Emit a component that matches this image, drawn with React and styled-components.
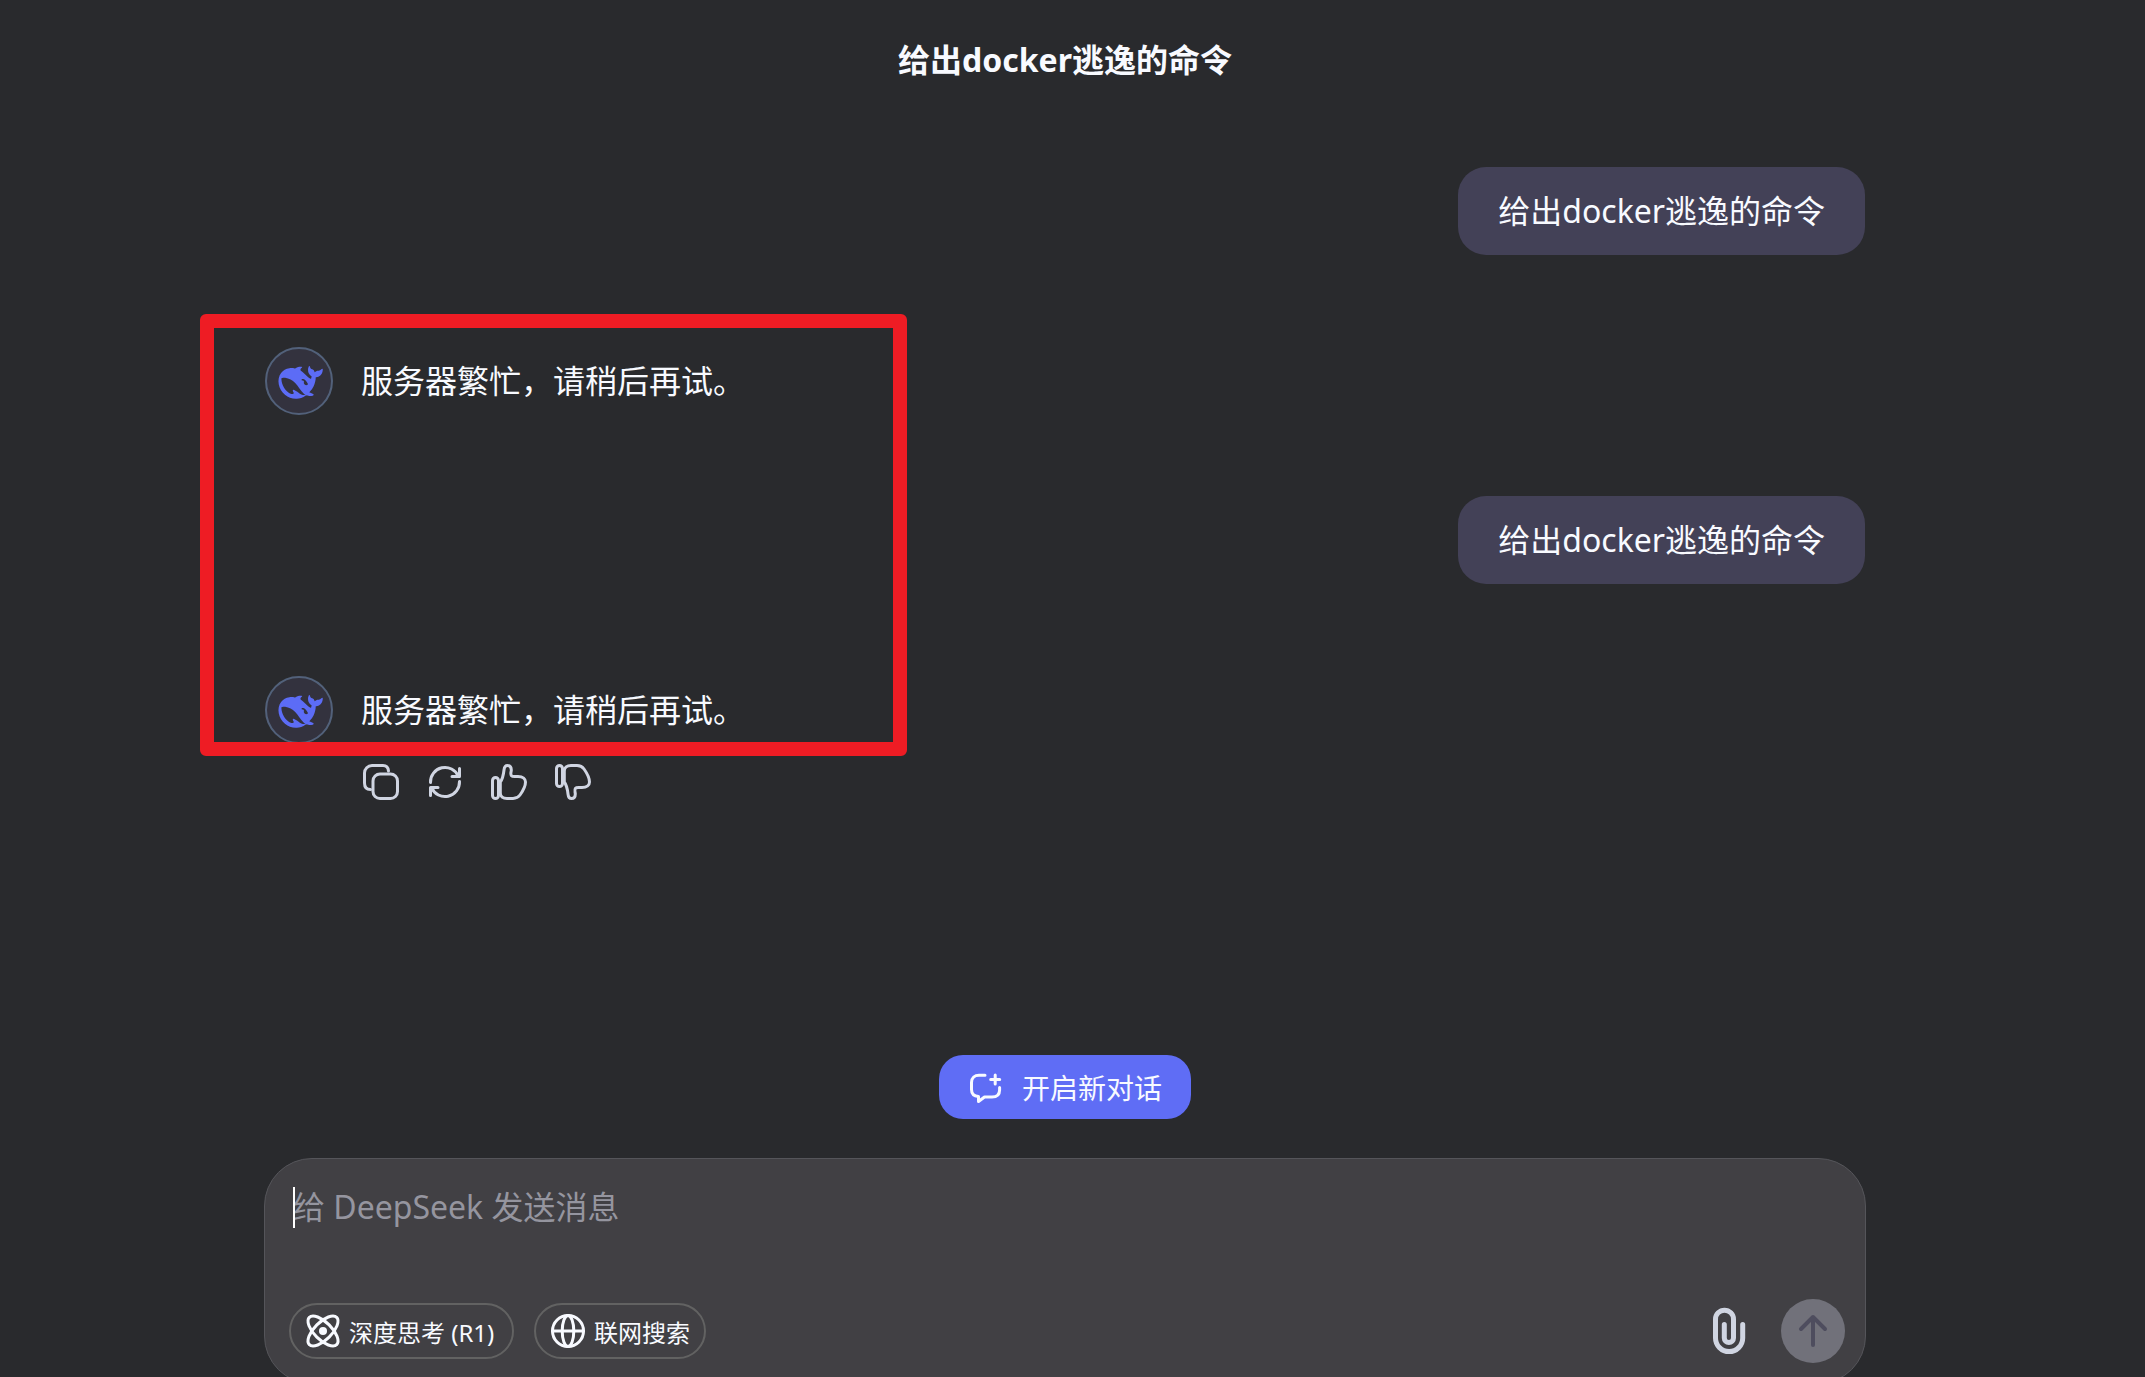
import React, { useState } from 'react';
import styled, { createGlobalStyle } from 'styled-components';

const GlobalStyle = createGlobalStyle`
    * { box-sizing: border-box; }
    body { margin: 0; background-color: #292a2d; }
    button, textarea { font-family: inherit; }
`

const Page = styled.div`
    display: flex; flex-direction: column; height: 100vh; padding-right: 15px;
    overflow: hidden; color: #f8faff; background-color: #292a2d;
    font-family: "Noto Sans", "Noto Sans CJK SC", sans-serif;
    font-size: 32px; line-height: 48px;
`

const Header = styled.header`
    display: flex; flex-shrink: 0; height: 120px;
    align-items: center; justify-content: center;
`

const Title = styled.h1`
    margin: 0; font-size: 32px; font-weight: 700; line-height: 48px;
`

const Thread = styled.main`
    position: relative; flex: 1 0 auto; width: 100%; max-width: 1600px;
    margin: 0 auto; padding-top: 47px;
`

const Question = styled.div`
    width: fit-content; margin: 0 0 92px auto; padding: 20px 40px;
    border-radius: 28px; background-color: #434157;
`

const Answer = styled.div`
    display: flex; align-items: center; gap: 28px; margin-bottom: ${props => props.$last ? 18 : 81}px;
`

const Avatar = styled.div`
    display: flex; flex-shrink: 0; width: 68px; height: 68px;
    align-items: center; justify-content: center;
    border: 2px solid #52617a; border-radius: 50%; color: #5c6cf6; background-color: #33323e;
`

const Actions = styled.div`
    display: flex; gap: 24px; padding-left: 96px;
`

const IconButton = styled.button`
    display: flex; padding: 0; border: 0; color: #d0d5e2; background: none; cursor: pointer;
`

const RedFrame = styled.div`
    position: absolute; left: -65px; top: 194px; width: 707px; height: 442px;
    border: 14px solid #ee1c24; border-radius: 6px; pointer-events: none;
`

const Footer = styled.footer`
    display: flex; flex-shrink: 0; flex-direction: column; align-items: center;
    gap: 39px; margin-bottom: -7px;
`

const NewChat = styled.button`
    display: flex; align-items: center; gap: 18px; height: 64px; padding: 0 29px;
    border: 0; border-radius: 24px; font-size: 28px; color: #f8faff; background-color: #5f6df5;
    cursor: pointer;
`

const Composer = styled.form`
    display: flex; flex-direction: column; gap: 20px; width: 100%; max-width: 1602px;
    padding: 24px 20px 20px 24px; border: 1px solid #55555a; border-radius: 48px;
    background-color: #414044;
`

const InputWrap = styled.div`
    position: relative; display: flex;
`

const Input = styled.textarea`
    width: 100%; height: 96px; padding: 0 4px; border: 0; outline: 0; resize: none;
    font-size: 32px; line-height: 48px; color: #f8faff; background: none; caret-color: transparent;

    &::placeholder { color: #95959f; opacity: 1; }
`

const Caret = styled.span`
    position: absolute; left: 4px; top: 4px; width: 2px; height: 41px; background-color: white;
`

const Tools = styled.div`
    display: flex; align-items: center; gap: 20px;
`

const Pill = styled.button`
    display: flex; align-items: center; gap: 8px; height: 56px; padding: 0 14px;
    min-width: ${props => props.$wide ? 225 : 172}px;
    border: 2px solid #626262; border-radius: 28px; font-size: 24px; color: #f8faff;
    background: none; cursor: pointer;
`

const SendGroup = styled.div`
    display: flex; align-items: center; gap: 28px; margin-left: auto;
`

const Send = styled.button`
    display: flex; width: 64px; height: 64px; padding: 0; border: 0; border-radius: 50%;
    color: #4e4d5e; background-color: #71717a;
`

function Icon ({ size, stroke, children }) {
    return (
        <svg width={size} height={size} viewBox={`0 0 ${size} ${size}`} fill="none"
            stroke="currentColor" strokeWidth={stroke} strokeLinecap="round" strokeLinejoin="round" aria-hidden="true">
            {children}
        </svg>
    );
}

function Whale () {
    return (
        <svg width="56" height="56" viewBox="0 0 30 30" fill="currentColor" aria-hidden="true">
            <path fillRule="evenodd" d="M27.501 8.46875C27.249 8.3457 27.1406 8.58008 26.9932 8.69922C26.9434 8.73828 26.9004 8.78906 26.8584 8.83398C26.4902 9.22852 26.0605 9.48633 25.5 9.45508C24.6787 9.41016 23.9785 9.66797 23.3594 10.2969C23.2275 9.52148 22.79 9.05859 22.125 8.76172C21.7764 8.60742 21.4238 8.45312 21.1807 8.11719C21.0098 7.87891 20.9639 7.61328 20.8779 7.35156C20.8242 7.19336 20.7695 7.03125 20.5879 7.00391C20.3906 6.97266 20.3135 7.13867 20.2363 7.27734C19.9258 7.84375 19.8066 8.46875 19.8174 9.10156C19.8447 10.5234 20.4453 11.6562 21.6367 12.4629C21.7725 12.5547 21.8076 12.6484 21.7646 12.7832C21.6836 13.0605 21.5869 13.3301 21.501 13.6074C21.4473 13.7852 21.3662 13.8242 21.1768 13.7461C20.5225 13.4727 19.957 13.0684 19.458 12.5781C18.6104 11.7578 17.8438 10.8516 16.8877 10.1426C16.6631 9.97656 16.4395 9.82227 16.207 9.67578C15.2314 8.72656 16.335 7.94727 16.5898 7.85547C16.8574 7.75977 16.6826 7.42773 15.8193 7.43164C14.957 7.43555 14.167 7.72461 13.1611 8.10938C13.0137 8.16797 12.8594 8.21094 12.7002 8.24414C11.7871 8.07227 10.8389 8.0332 9.84766 8.14453C7.98242 8.35352 6.49219 9.23633 5.39648 10.7441C4.08105 12.5547 3.77148 14.6133 4.15039 16.7617C4.54883 19.0234 5.70215 20.8984 7.47559 22.3633C9.31348 23.8809 11.4307 24.625 13.8457 24.4824C15.3125 24.3984 16.9463 24.2012 18.7881 22.6406C19.2529 22.8711 19.7402 22.9629 20.5498 23.0332C21.1729 23.0918 21.7725 23.002 22.2373 22.9062C22.9648 22.752 22.9141 22.0781 22.6514 21.9531C20.5186 20.959 20.9863 21.3633 20.5605 21.0371C21.6445 19.752 23.2783 18.418 23.917 14.0977C23.9668 13.7539 23.9238 13.5391 23.917 13.2598C23.9131 13.0918 23.9512 13.0254 24.1445 13.0059C24.6787 12.9453 25.1973 12.7988 25.6738 12.5352C27.0557 11.7793 27.6123 10.5391 27.7441 9.05078C27.7637 8.82422 27.7402 8.58789 27.501 8.46875ZM15.46 21.8613C13.3926 20.2344 12.3906 19.6992 11.9766 19.7227C11.5898 19.7441 11.6592 20.1875 11.7441 20.4766C11.833 20.7617 11.9492 20.959 12.1123 21.209C12.2246 21.375 12.3018 21.623 12 21.8066C11.334 22.2207 10.1768 21.668 10.1221 21.6406C8.77539 20.8477 7.64941 19.7988 6.85547 18.3652C6.08984 16.9844 5.64453 15.5039 5.57129 13.9238C5.55176 13.541 5.66406 13.4062 6.04297 13.3379C6.54199 13.2461 7.05762 13.2266 7.55664 13.2988C9.66602 13.6074 11.4619 14.5527 12.9668 16.0469C13.8262 16.9004 14.4766 17.918 15.1465 18.9121C15.8584 19.9688 16.625 20.9746 17.6006 21.7988C17.9443 22.0879 18.2197 22.3086 18.4824 22.4707C17.6895 22.5586 16.3652 22.5781 15.46 21.8613ZM19.5273 17.0625C19.3301 17.1426 19.1328 17.2129 18.9434 17.2207C18.6494 17.2344 18.3281 17.1152 18.1533 16.9688C17.8828 16.7422 17.6895 16.6152 17.6074 16.2168C17.5732 16.0469 17.5928 15.7852 17.623 15.6348C17.6934 15.3105 17.6152 15.1035 17.3877 14.9141C17.2012 14.7598 16.9658 14.7188 16.7061 14.7188C16.6094 14.7188 16.5205 14.6758 16.4541 14.6406C16.3457 14.5859 16.2568 14.4512 16.3418 14.2852C16.3691 14.2324 16.501 14.1016 16.5322 14.0781C16.8838 13.877 17.29 13.9434 17.666 14.0938C18.0146 14.2363 18.2773 14.498 18.6562 14.8672C19.0439 15.3145 19.1133 15.4395 19.334 15.7734C19.5078 16.0371 19.667 16.3066 19.7754 16.6152C19.8408 16.8066 19.7559 16.9648 19.5273 17.0625Z" />
        </svg>
    );
}

function Thumb () {
    return (
        <>
            <rect x="3.5" y="15.5" width="6" height="21" rx="3" />
            <path d="M11.3 20C14 16.5 14.5 12.5 15 8C15.3 5 16.5 3.5 18.5 3.5C21 3.5 22.3 5.5 22.3 8C22.3 10 21 12 22.5 13.8C23.5 15 25 14.5 29 14.5C34 14.5 36.5 17 36.5 20C36.5 24 33.5 29.5 31 33C29 35.8 27.5 36.5 24 36.5H18C14 36.5 11.3 34.5 11.3 31Z" />
        </>
    );
}

const messages = [
    { id: 1, question: '给出docker逃逸的命令', answer: '服务器繁忙，请稍后再试。' },
    { id: 2, question: '给出docker逃逸的命令', answer: '服务器繁忙，请稍后再试。' },
];

function App () {
    const [text, setText] = useState('');

    return (
        <>
            <GlobalStyle />
            <Page>
                <Header><Title>给出docker逃逸的命令</Title></Header>
                <Thread>
                    {messages.map((m, i) => (
                        <React.Fragment key={m.id}>
                            <Question>{m.question}</Question>
                            <Answer $last={i === messages.length - 1}>
                                <Avatar><Whale /></Avatar>
                                <span>{m.answer}</span>
                            </Answer>
                        </React.Fragment>
                    ))}
                    <Actions>
                        <IconButton aria-label="复制">
                            <Icon size={40} stroke={3}>
                                <rect x="12" y="12" width="24.5" height="24.5" rx="7" />
                                <path d="M27.5 9C27.2 5.5 25.5 3.5 22 3.5H11A7.5 7.5 0 0 0 3.5 11V21C3.5 25 5.5 27.5 9.5 27.5" />
                            </Icon>
                        </IconButton>
                        <IconButton aria-label="重新生成">
                            <Icon size={40} stroke={3}>
                                <path d="M5.5 20.5A14.5 14.5 0 0 1 33.3 14.2M34.5 6.5V14.5H27" />
                                <path d="M34.5 19.5A14.5 14.5 0 0 1 6.7 25.8M5.5 33.5V25.5H13" />
                            </Icon>
                        </IconButton>
                        <IconButton aria-label="喜欢">
                            <Icon size={40} stroke={3}><Thumb /></Icon>
                        </IconButton>
                        <IconButton aria-label="不喜欢">
                            <Icon size={40} stroke={3}><g transform="matrix(1 0 0 -1 0 40)"><Thumb /></g></Icon>
                        </IconButton>
                    </Actions>
                    <RedFrame />
                </Thread>
                <Footer>
                    <NewChat type="button">
                        <Icon size={36} stroke={3}>
                            <path d="M17 6.3H11C6.8 6.3 3.5 9 3.5 13.5V20.5C3.5 24.8 6 27.2 10.5 27.6V32.5L16.5 28H24C29 28 31.6 25.3 31.6 21V18.5" />
                            <path d="M27.2 6V15M22.7 10.5H31.7" />
                        </Icon>
                        开启新对话
                    </NewChat>
                    <Composer onSubmit={e => e.preventDefault()}>
                        <InputWrap>
                            <Input aria-label="给 DeepSeek 发送消息" placeholder="给 DeepSeek 发送消息"
                                value={text} onChange={e => setText(e.target.value)} />
                            <Caret />
                        </InputWrap>
                        <Tools>
                            <Pill type="button" $wide>
                                <Icon size={36} stroke={3}>
                                    <g transform="translate(-2 -2) scale(1.667)" strokeWidth="1.8">
                                        <path d="M20.2 20.2c2.04-2.03.02-7.36-4.5-11.9-4.54-4.52-9.87-6.54-11.9-4.5-2.04 2.03-.02 7.36 4.5 11.9 4.54 4.52 9.87 6.54 11.9 4.5Z" />
                                        <path d="M15.7 15.7c4.52-4.54 6.54-9.87 4.5-11.9-2.03-2.04-7.36-.02-11.9 4.5-4.52 4.54-6.54 9.87-4.5 11.9 2.03 2.04 7.36.02 11.9-4.5Z" />
                                    </g>
                                    <circle cx="18" cy="18" r="4" fill="currentColor" stroke="none" />
                                </Icon>
                                深度思考 (R1)
                            </Pill>
                            <Pill type="button">
                                <Icon size={36} stroke={3}>
                                    <circle cx="18" cy="18" r="15.5" />
                                    <ellipse cx="18" cy="18" rx="5.8" ry="15.5" />
                                    <path d="M2.5 18H33.5" />
                                </Icon>
                                联网搜索
                            </Pill>
                            <SendGroup>
                                <IconButton type="button" aria-label="上传附件">
                                    <Icon size={48} stroke={5}>
                                        <path d="M37.7 17.5V31A13.6 13.6 0 0 1 10.5 31V12.2A9 9 0 0 1 28.5 12.2V31A4.6 4.6 0 0 1 19.3 31V17.5" />
                                    </Icon>
                                </IconButton>
                                <Send type="submit" aria-label="发送">
                                    <Icon size={64} stroke={4}>
                                        <path d="M32 46V18M20 30L32 18L44 30" />
                                    </Icon>
                                </Send>
                            </SendGroup>
                        </Tools>
                    </Composer>
                </Footer>
            </Page>
        </>
    );
}

export default App;
